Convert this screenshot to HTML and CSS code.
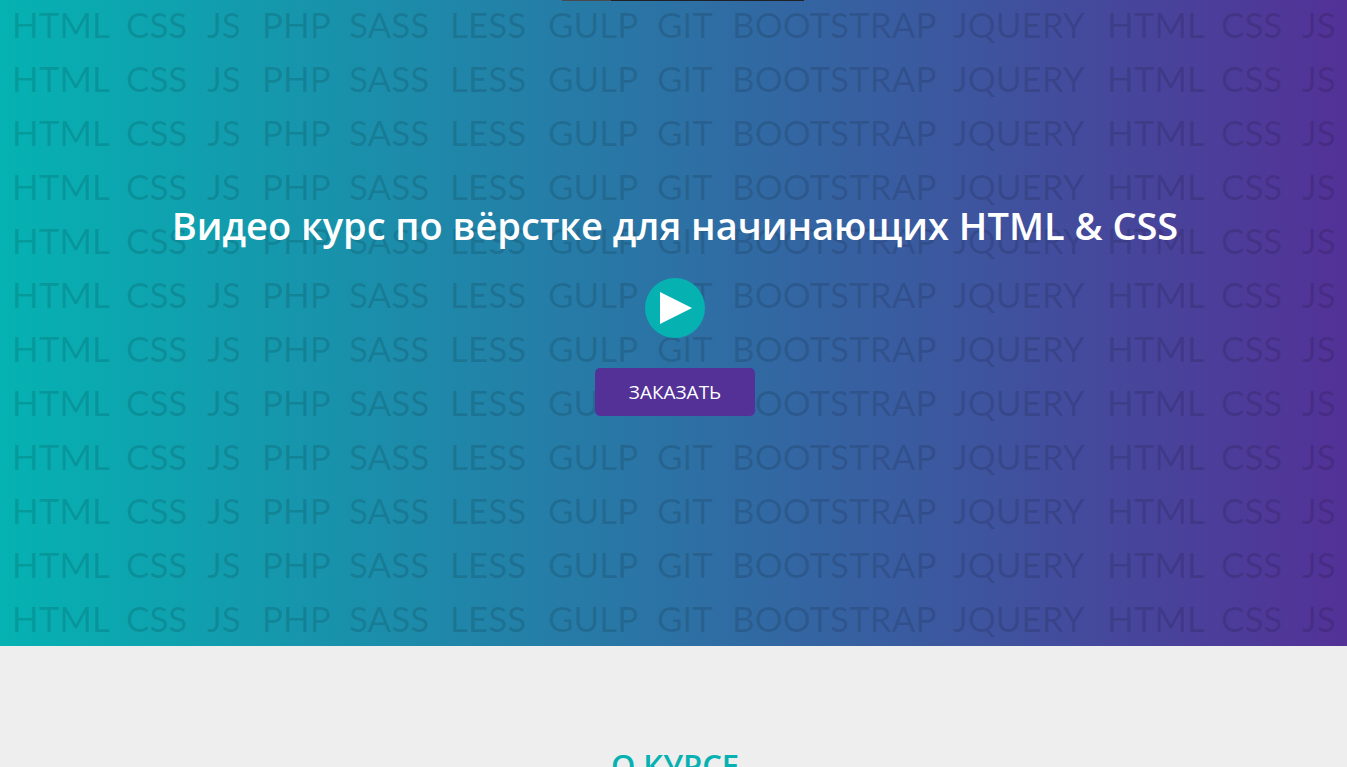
FILE: index.html
```
<!DOCTYPE html>
<html lang="ru">
<head>
<meta charset="utf-8">
<meta name="viewport" content="width=device-width, initial-scale=1">
<title>Видео курс по вёрстке</title>
<link rel="stylesheet" href="styles.css">
</head>
<body>
<div class="top-edge"></div>
<header class="hero">
  <div class="words" id="words" aria-hidden="true"></div>
  <div class="hero-content">
    <h1 class="hero-title">Видео курс по вёрстке для начинающих HTML &amp; CSS</h1>
    <button class="play" type="button" aria-label="Смотреть видео">
      <svg class="play-icon" viewBox="0 0 60 60" aria-hidden="true"><path d="M15 14L47 30L15 46Z" fill="#fff"/></svg>
    </button>
    <a class="order" href="#order">ЗАКАЗАТЬ</a>
  </div>
</header>
<main class="about">
  <h2 class="about-title">О КУРСЕ</h2>
</main>
<script src="script.js"></script>
</body>
</html>
```
FILE: styles.css
```
* {
  box-sizing: border-box;
}

body {
  margin: 0;
  overflow-x: hidden;
  scrollbar-width: none;
  background: #eee;
  font-family: "Open Sans", "Noto Sans", sans-serif;
}

.top-edge {
  position: absolute;
  z-index: 2;
  top: 0;
  left: 562px;
  width: 242px;
  height: 1px;
  background: linear-gradient(90deg, #4a4a4c 49px, #202124 49px);
}

.hero {
  display: grid;
  overflow: hidden;
  background: linear-gradient(90deg, #05b2b2, #533197);
}

.words,
.hero-content {
  grid-area: 1 / 1;
  min-width: 0;
}

.words {
  height: 646px;
  overflow: hidden;
  color: rgba(0, 0, 0, 0.12);
  font-family: Lato, "Open Sans", sans-serif;
  font-size: 35px;
  font-weight: 400;
}

.words-row {
  display: grid;
  grid-template-columns: 114px 81px 55px 87px 101px 98px 109px 75px 221px 154px 114px 81px 55px;
  height: 54px;
  padding-left: 12px;
  line-height: 49px;
}

.hero-content {
  z-index: 1;
  display: flex;
  flex-direction: column;
  align-items: center;
  padding: 199px 0 0 3px;
}

.hero-title {
  margin: 0 0 27px;
  color: #fff;
  font-size: 38px;
  font-weight: 600;
  line-height: 52px;
  text-align: center;
}

.play {
  width: 60px;
  height: 60px;
  margin-bottom: 30px;
  padding: 0;
  border: 0;
  border-radius: 50%;
  background: #06b1b2;
  cursor: pointer;
}

.play-icon {
  display: block;
}

.order {
  width: 160px;
  border-radius: 5px;
  background: #533197;
  color: #fff;
  font-size: 19px;
  line-height: 48px;
  text-align: center;
  text-decoration: none;
}

.about {
  padding: 97px 0 98px 3px;
}

.about-title {
  margin: 0;
  color: #06b1b2;
  font-size: 31px;
  font-weight: 600;
  line-height: 44px;
  text-align: center;
}
```
FILE: script.js
```
const words = ["HTML", "CSS", "JS", "PHP", "SASS", "LESS", "GULP", "GIT", "BOOTSTRAP", "JQUERY", "HTML", "CSS", "JS"];
const backdrop = document.getElementById("words");
for (let i = 0; i < 12; i++) {
  const row = document.createElement("div");
  row.className = "words-row";
  for (const word of words) {
    const cell = document.createElement("span");
    cell.textContent = word;
    row.append(cell);
  }
  backdrop.append(row);
}
```
